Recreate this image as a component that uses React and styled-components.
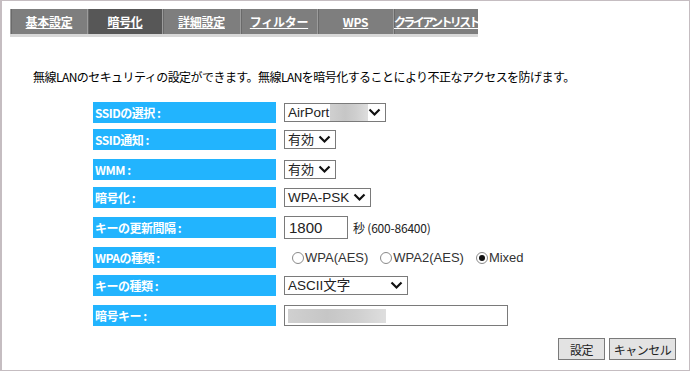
import React from "react";
import styled, { createGlobalStyle } from "styled-components";

const GlobalStyle = createGlobalStyle`
  html, body {
    margin: 0;
    padding: 0;
    background: #fff;
  }
  body {
    font-family: "Liberation Sans", "Noto Sans CJK JP", sans-serif;
  }
`;

const tabs = [
  { name: "基本設定", width: 77 },
  { name: "暗号化", width: 75, active: true },
  { name: "詳細設定", width: 78 },
  { name: "フィルター", width: 77 },
  { name: "WPS", width: 76 },
  { name: "クライアントリスト", width: 85, tight: true },
];

const Chevron = () => (
  <svg width="13" height="9" viewBox="0 0 13 9">
    <path d="M1.5 1.5 L6.5 6.5 L11.5 1.5" fill="none" stroke="#111" strokeWidth="2.2" />
  </svg>
);

const App = () => {
  return (
    <>
      <GlobalStyle />
      <Frame>
        <TabBar>
          {tabs.map(t => (
            <Tab key={t.name} $width={t.width} $active={t.active}>
              <TabLink $tight={t.tight}>{t.name}</TabLink>
            </Tab>
          ))}
        </TabBar>

        <Description>
          無線LANのセキュリティの設定ができます。無線LANを暗号化することにより不正なアクセスを防げます。
        </Description>

        <Form>
          <Row $pitch={27}>
            <Label>SSIDの選択 :</Label>
            <Control>
              <SelectBox $width={102}>
                <SelectText>AirPort</SelectText>
                <Masked $width={38} />
                <Chevron />
              </SelectBox>
            </Control>
          </Row>
          <Row $pitch={30}>
            <Label>SSID通知 :</Label>
            <Control>
              <SelectBox $width={52}>
                <SelectText $cjk>有効</SelectText>
                <Chevron />
              </SelectBox>
            </Control>
          </Row>
          <Row $pitch={28}>
            <Label>WMM :</Label>
            <Control>
              <SelectBox $width={52}>
                <SelectText $cjk>有効</SelectText>
                <Chevron />
              </SelectBox>
            </Control>
          </Row>
          <Row $pitch={30}>
            <Label>暗号化 :</Label>
            <Control>
              <SelectBox $width={87}>
                <SelectText>WPA-PSK</SelectText>
                <Chevron />
              </SelectBox>
            </Control>
          </Row>
          <Row $pitch={30}>
            <Label>キーの更新間隔 :</Label>
            <Control>
              <NumberInput defaultValue="1800" />
              <Hint>秒 (600-86400)</Hint>
            </Control>
          </Row>
          <Row $pitch={28}>
            <Label>WPAの種類 :</Label>
            <Control>
              <RadioGroup>
                <RadioItem><Radio type="radio" name="wpa" />WPA(AES)</RadioItem>
                <RadioItem><Radio type="radio" name="wpa" />WPA2(AES)</RadioItem>
                <RadioItem><Radio type="radio" name="wpa" defaultChecked />Mixed</RadioItem>
              </RadioGroup>
            </Control>
          </Row>
          <Row $pitch={30}>
            <Label>キーの種類 :</Label>
            <Control>
              <SelectBox $width={124}>
                <SelectText>ASCII文字</SelectText>
                <Chevron />
              </SelectBox>
            </Control>
          </Row>
          <Row $pitch={22}>
            <Label>暗号キー :</Label>
            <Control>
              <MaskedField>
                <Masked $width={98} $tall />
              </MaskedField>
            </Control>
          </Row>
        </Form>

        <Buttons>
          <Button $width={47}>設定</Button>
          <Button $width={67}>キャンセル</Button>
        </Buttons>
      </Frame>
    </>
  );
};

export default App;

const Frame = styled.div`
  box-sizing: border-box;
  width: 690px;
  height: 371px;
  border: 1px solid #c5bdc1;
  border-left-width: 2px;
  display: flex;
  flex-direction: column;
`;

const TabBar = styled.div`
  display: flex;
  width: 468px;
  margin: 8px 0 0 8px;
  background: #7e7e7e;
  border-bottom: 3px solid #d8d8d8;
`;

const Tab = styled.div`
  box-sizing: border-box;
  width: ${p => p.$width}px;
  height: 25px;
  display: flex;
  align-items: center;
  justify-content: center;
  overflow: hidden;
  background: ${p => (p.$active ? "#575757" : "#7e7e7e")};
  border-left: 1px solid #9c9c9c;
  box-shadow: inset 1px 0 0 #6a6a6a;
  position: relative;

  &::after {
    content: "";
    display: ${p => (p.$active ? "block" : "none")};
    position: absolute;
    left: 0;
    right: 0;
    bottom: -3px;
    height: 3px;
    background: #c3c3bd;
  }
`;

const TabLink = styled.span`
  font-family: "Noto Sans CJK JP", sans-serif;
  font-size: 12px;
  font-weight: bold;
  color: #fff;
  text-decoration: underline;
  white-space: nowrap;
  letter-spacing: ${p => (p.$tight ? "-2.6px" : "-0.3px")};
`;

const Description = styled.p`
  margin: 32px 0 0 31px;
  font-family: "Noto Sans CJK JP", sans-serif;
  font-size: 12px;
  line-height: 16px;
  letter-spacing: -0.55px;
  color: #000;
`;

const Form = styled.div`
  display: flex;
  flex-direction: column;
  margin: 17px 0 0 91px;
`;

const Row = styled.div`
  display: flex;
  align-items: flex-start;
  height: ${p => p.$pitch}px;
`;

const Label = styled.div`
  box-sizing: border-box;
  width: 183px;
  height: 21px;
  padding-left: 2px;
  background: #22b4fe;
  color: #fff;
  font-family: "Noto Sans CJK JP", sans-serif;
  font-size: 12px;
  font-weight: bold;
  line-height: 21px;
  letter-spacing: -0.5px;
`;

const Control = styled.div`
  display: flex;
  align-items: center;
  height: 21px;
  margin-left: 8px;
`;

const SelectBox = styled.div`
  box-sizing: border-box;
  width: ${p => p.$width}px;
  height: 19px;
  display: flex;
  align-items: center;
  padding: 0 4px 0 3px;
  border: 1px solid #7a7a7a;
  background: #fff;

  svg {
    margin-left: auto;
    flex-shrink: 0;
  }
`;

const SelectText = styled.span`
  font-family: "Liberation Sans", "Noto Sans CJK JP", sans-serif;
  font-size: ${p => (p.$cjk ? 13 : 13.5)}px;
  line-height: 17px;
  color: #222;
  white-space: nowrap;
`;

const Masked = styled.span`
  display: inline-block;
  width: ${p => p.$width}px;
  height: ${p => (p.$tall ? 14 : 17)}px;
  margin-left: 1px;
  background: linear-gradient(90deg, #d0d0d0 0%, #c6c6c6 40%, #cfcfcf 70%, #dedede 100%);
`;

const NumberInput = styled.input`
  box-sizing: border-box;
  width: 64px;
  height: 23px;
  padding: 0 4px;
  border: 1px solid #7a7a7a;
  font-family: "Liberation Sans", sans-serif;
  font-size: 15px;
  color: #222;
  outline: none;
`;

const Hint = styled.span`
  margin-left: 5px;
  font-family: "Noto Sans CJK JP", sans-serif;
  font-size: 12px;
  letter-spacing: -0.2px;
  color: #222;
`;

const RadioGroup = styled.div`
  display: flex;
  align-items: center;
  gap: 12px;
  margin-left: 8px;
`;

const RadioItem = styled.label`
  display: flex;
  align-items: center;
  font-family: "Liberation Sans", sans-serif;
  font-size: 13px;
  color: #333;
`;

const Radio = styled.input`
  appearance: none;
  box-sizing: border-box;
  width: 12px;
  height: 12px;
  margin: 0 1px 0 0;
  border: 1px solid #8a8a8a;
  border-radius: 50%;
  background: #fff;
  position: relative;

  &:checked::after {
    content: "";
    position: absolute;
    left: 2px;
    top: 2px;
    width: 6px;
    height: 6px;
    border-radius: 50%;
    background: #111;
  }
`;

const MaskedField = styled.div`
  box-sizing: border-box;
  width: 224px;
  height: 21px;
  display: flex;
  align-items: center;
  padding-left: 2px;
  border: 1px solid #7a7a7a;
  background: #fff;
`;

const Buttons = styled.div`
  display: flex;
  justify-content: flex-end;
  gap: 4px;
  margin: 11px 13px 0 0;
`;

const Button = styled.button`
  box-sizing: border-box;
  width: ${p => p.$width}px;
  height: 22px;
  padding: 0;
  border: 1px solid #7a7a7a;
  background: #e3e3e3;
  font-family: "Noto Sans CJK JP", sans-serif;
  font-size: 12px;
  letter-spacing: -0.5px;
  color: #222;
`;
